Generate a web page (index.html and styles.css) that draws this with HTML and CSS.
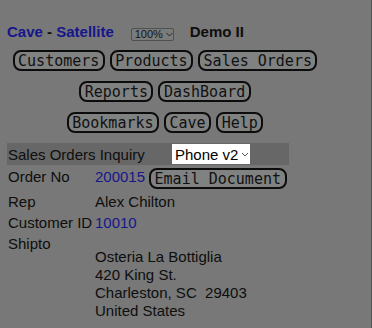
FILE: index.html
```html
<!DOCTYPE html>
<html>
<head>
<meta charset="utf-8">
<link rel="stylesheet" href="styles.css">
</head>
<body>
<div class="screen">
  <div class="topbar">
    <span class="title"><span class="link">Cave</span> - <span class="link">Satellite</span></span>
    <span class="zoom">100%<svg class="chev" width="7" height="5" viewBox="0 0 7 5"><path d="M0.5 1 L3.5 4 L6.5 1" fill="none" stroke="#222" stroke-width="1"/></svg></span>
    <span class="demo">Demo II</span>
  </div>
  <div class="nav">
    <div class="navrow">
      <span class="btn">Customers</span><span class="btn">Products</span><span class="btn">Sales Orders</span>
    </div>
    <div class="navrow">
      <span class="btn">Reports</span><span class="btn">DashBoard</span>
    </div>
    <div class="navrow">
      <span class="btn">Bookmarks</span><span class="btn">Cave</span><span class="btn">Help</span>
    </div>
  </div>
  <div class="inquiry">
    <span class="inq-label">Sales Orders Inquiry</span>
    <span class="phone">Phone v2<svg class="chev2" width="8" height="5" viewBox="0 0 8 5"><path d="M1 1 L4 4 L7 1" fill="none" stroke="#555" stroke-width="1"/></svg></span>
  </div>
  <div class="info">
    <div class="row row-order"><span class="lbl">Order No</span><span class="val link">200015</span><span class="btn btn-email">Email Document</span></div>
    <div class="row"><span class="lbl">Rep</span><span class="val">Alex Chilton</span></div>
    <div class="row"><span class="lbl">Customer ID</span><span class="val link">10010</span></div>
    <div class="row row-ship"><span class="lbl">Shipto</span></div>
    <div class="address">
      <div>Osteria La Bottiglia</div>
      <div>420 King St.</div>
      <div>Charleston, SC&nbsp; 29403</div>
      <div>United States</div>
    </div>
  </div>
</div>
</body>
</html>
```
FILE: styles.css
```css
html, body {
  margin: 0;
  padding: 0;
  background: #777877;
}
body {
  font-family: "Liberation Sans", Arial, sans-serif;
  font-size: 15px;
  color: #0e0e0e;
}
.screen {
  width: 371px;
  height: 328px;
  border-right: 1px solid #555656;
  overflow: hidden;
}
.link { color: #16168c; }
.topbar {
  display: flex;
  align-items: baseline;
  padding: 23px 0 0 7px;
  height: 18px;
  line-height: 18px;
}
.title { font-weight: bold; }
.zoom {
  margin-left: 17px;
  display: inline-flex;
  align-items: center;
  gap: 3px;
  box-sizing: border-box;
  width: 43px;
  height: 13px;
  padding: 0 0 0 3px;
  border: 1px solid #4f5050;
  border-radius: 2px;
  font-size: 11px;
  line-height: 11px;
  background: #7a7b7b;
  color: #151515;
  position: relative;
  top: 1px;
}
.demo {
  margin-left: 16px;
  font-weight: bold;
}
.nav {
  width: 316px;
  margin: 9px 0 0 7px;
  display: flex;
  flex-direction: column;
  gap: 10px;
}
.navrow {
  display: flex;
  justify-content: center;
  gap: 5px;
}
.btn {
  display: inline-flex;
  align-items: center;
  box-sizing: border-box;
  height: 21px;
  padding: 0 3.5px;
  border: 2px solid #0c0c0c;
  border-radius: 8px;
  background: #808181;
  font-family: "DejaVu Sans Mono", "Liberation Mono", monospace;
  font-size: 15px;
  color: #111;
  white-space: pre;
}
.inquiry {
  margin: 10px 0 0 7px;
  width: 282px;
  height: 22px;
  background: #676767;
  display: flex;
  align-items: center;
}
.inq-label {
  width: 164px;
  padding-left: 1px;
}
.phone {
  display: inline-flex;
  align-items: center;
  gap: 3px;
  box-sizing: border-box;
  width: 78px;
  height: 20px;
  padding-left: 3px;
  background: #ffffff;
  color: #000;
}
.info {
  padding-left: 8px;
}
.row {
  display: flex;
  align-items: center;
  height: 21px;
  line-height: 21px;
}
.row-order {
  height: 26px;
  box-sizing: border-box;
  padding-top: 3px;
  align-items: flex-start;
  line-height: 18px;
}
.row-ship {
  height: 15px;
  align-items: flex-start;
}
.lbl {
  width: 87px;
  flex: none;
}
.val { margin-right: 4px; }
.address {
  padding-left: 87px;
  line-height: 18px;
}
```
